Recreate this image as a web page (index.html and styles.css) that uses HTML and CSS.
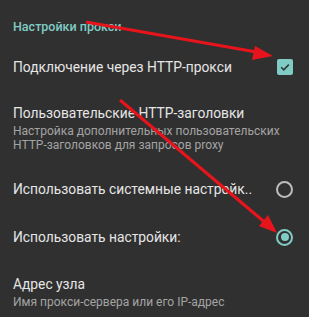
FILE: index.html
```html
<!DOCTYPE html>
<html lang="ru">
<head>
<meta charset="UTF-8">
<meta name="viewport" content="width=device-width, initial-scale=1.0">
<title>Настройки прокси</title>
<link rel="stylesheet" href="styles.css">
</head>
<body>

<div class="screen">

  <!-- CATEGORY -->
  <div class="category">Настройки прокси</div>

  <div class="row">
    <div class="text">
      <div class="title">Подключение через HTTP-прокси</div>
    </div>
    <div class="check on">
      <svg width="12" height="12" viewBox="0 0 12 12"><path d="M2.2 6.2 L4.8 8.8 L9.8 3.6" fill="none" stroke="#2e3a39" stroke-width="1.6"/></svg>
    </div>
  </div>

  <div class="row tall">
    <div class="text">
      <div class="title">Пользовательские HTTP-заголовки</div>
      <div class="summary">Настройка дополнительных пользовательских HTTP-заголовков для запросов proxy</div>
    </div>
  </div>

  <div class="row">
    <div class="text">
      <div class="title">Использовать системные настройк..</div>
    </div>
    <div class="radio"></div>
  </div>

  <div class="row">
    <div class="text">
      <div class="title">Использовать настройки:</div>
    </div>
    <div class="radio on"></div>
  </div>

  <div class="row last">
    <div class="text">
      <div class="title">Адрес узла</div>
      <div class="summary">Имя прокси-сервера или его IP-адрес</div>
    </div>
  </div>

  <!-- ARROWS -->
  <svg class="arrows" width="309" height="317" viewBox="0 0 309 317">
    <line x1="86" y1="22" x2="262" y2="53" stroke="#e8141c" stroke-width="3"/>
    <polygon points="273,56 255,46 252,60" fill="#e8141c"/>
    <line x1="120" y1="100" x2="268" y2="225" stroke="#e8141c" stroke-width="3"/>
    <polygon points="277,233 259,226 268,215" fill="#e8141c"/>
  </svg>

</div>

</body>
</html>
```

FILE: styles.css
```css
body{
 margin:0;
 background:#303030;
 font-family:Roboto,'Noto Sans',sans-serif;
 color:#e6e6e6;
}

.screen{
 position:relative;
 width:309px;
 height:317px;
 overflow:hidden;
}

/* CATEGORY */
.category{
 height:43px;
 box-sizing:border-box;
 padding:20px 13px 0;
 font-size:12.5px;
 line-height:14px;
 font-weight:500;
 color:#80cbc4;
}

/* ROWS */
.row{
 display:flex;
 align-items:center;
 height:48px;
 padding:0 16px 0 13px;
}

.row.tall{
 height:74px;
}

.row.last{
 align-items:flex-start;
 padding-top:14px;
}

.text{
 flex:1;
 min-width:0;
}

.title{
 font-size:13.8px;
 line-height:18px;
 white-space:nowrap;
}

.summary{
 font-size:12px;
 line-height:14px;
 color:#a4a4a4;
 margin-top:2px;
}

/* CONTROLS */
.check{
 width:16px;
 height:16px;
 border-radius:2px;
 display:flex;
 align-items:center;
 justify-content:center;
}

.check.on{
 background:#80cbc4;
}

.radio{
 width:13px;
 height:13px;
 border:2px solid #bdbdbd;
 border-radius:50%;
 position:relative;
}

.radio.on{
 border-color:#80cbc4;
}

.radio.on::after{
 content:"";
 position:absolute;
 left:2.5px;
 top:2.5px;
 width:8px;
 height:8px;
 border-radius:50%;
 background:#80cbc4;
}

.arrows{
 position:absolute;
 left:0;
 top:0;
 pointer-events:none;
}
```
